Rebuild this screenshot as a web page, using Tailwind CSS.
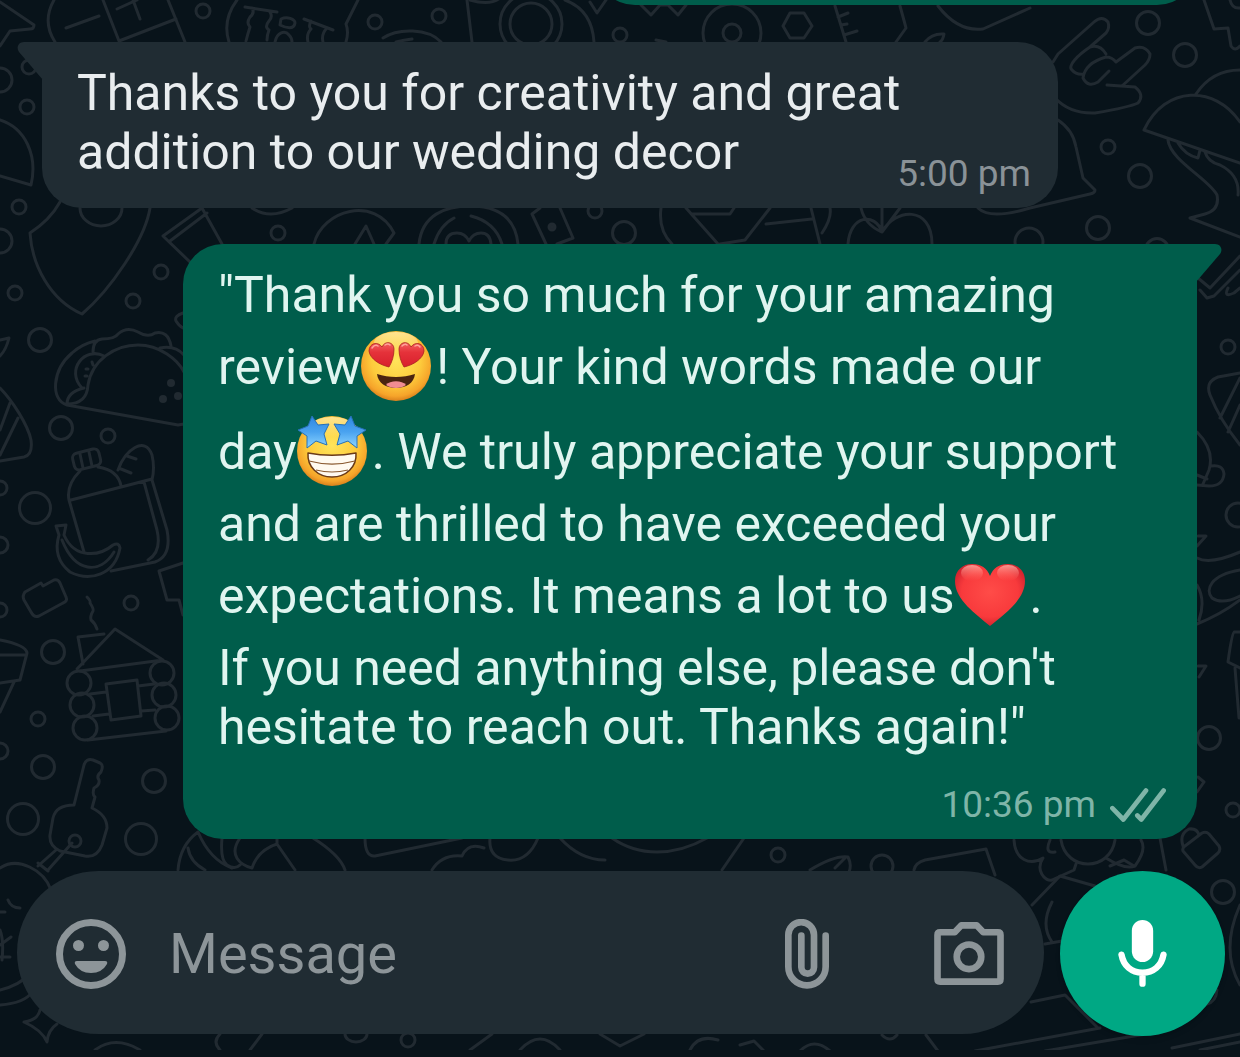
<!DOCTYPE html>
<html lang="en">
  <head>
    <meta charset="UTF-8" />
    <meta name="viewport" content="width=device-width, initial-scale=1.0" />
    <title>Chat</title>
    <script src="https://cdn.jsdelivr.net/npm/@tailwindcss/browser@4"></script>
  </head>
  <body class="bg-[#0b141a] font-[Roboto,sans-serif]">
    <div class="relative flex min-h-screen flex-col overflow-hidden">

      <!-- wallpaper -->
      <div class="absolute inset-x-0 top-0 bottom-[7px] bg-[#08131a]" aria-hidden="true">
        <svg class="h-full w-full" viewBox="0 0 1240 1050" preserveAspectRatio="xMidYMid slice" fill="none" stroke="#212a31" stroke-width="3" stroke-linecap="round" stroke-linejoin="round">
          <!-- top strip -->
          <path d="M0 2L34 25Q34 29 30 29L10 31L0 46" />
          <path d="M54 0C46 14 46 28 55 42M66 28L99 16M103 0L119 41L176 19M168 0L185 42M117 9L137 0M133 0L140 19" />
          <path d="M237 0Q222 20 229 42M245 7L277 12M252 8q3 5-2 9q-4 6 0 10q-2 6-4 14M270 12q3 5-1 9q-5 6 0 9q-2 5-2 10M281 19c6-3 14 0 14 4c-1 7-9 5-15 2zM275 42c2-10 10-12 14-7q3 3 3 7M304 19l29 11M311 21q-3 6 0 8q-5 5-3 13M327 28q-6 6-4 14" />
          <path d="M358 0L346 24Q349 32 346 42M383 38C398 28 428 28 441 42M396 42q8-2 16-3M467 0L472 42M565 0Q592 10 594 42M590 2l7 11L606 0M641 5l10 10l9-10h8l10 10l8-10M656 40l10 2" />
          <path d="M790 13h14l8 13-8 12h-14l-7-12zM835 6L846 42M838 17l10-4M841 25l6-1M844 35l13-4M900 6Q905 24 906 28L896 42M925 42Q932 33 944 34Q943 40 940 42M938 6Q958 32 983 29L1030 8" />
          <circle cx="203" cy="11" r="7" /><circle cx="375" cy="22" r="7" /><circle cx="439" cy="16" r="7" /><circle cx="620" cy="35" r="7" />
          <circle cx="531" cy="24" r="31" /><circle cx="531" cy="24" r="21" /><circle cx="732" cy="33" r="29" /><circle cx="732" cy="33" r="9" />
          <path d="M470 0q20 6 30-2" />
          <!-- hand, bell, hat -->
          <path d="M1053 62L1058 54L1094 22Q1102 15 1108 22Q1110 28 1106 33L1090 47C1078 55 1067 66 1072 70Q1076 75 1084 74M1090 47Q1100 44 1106 54M1106 57Q1085 63 1083 78Q1088 88 1098 82L1109 71M1106 57Q1112 57 1116 62L1135 48Q1145 45 1150 54Q1150 60 1145 65L1122 86M1107 85L1135 87Q1145 95 1138 103Q1130 107 1095 113Q1070 114 1055 98" />
          <path d="M1058 120Q1073 130 1076 147L1083 178L1095 190Q1095 193 1090 194L1030 208Q990 220 978 208" />
          <path d="M1204 0L1214 29L1228 28L1231 46Q1235 52 1240 46M1230 0q2 9 10 8M1144 130C1165 85 1215 85 1240 122M1144 130L1240 163M1196 94Q1212 70 1240 70M1168 140C1170 160 1210 180 1217 195Q1220 210 1205 214L1190 218L1240 237M1178 143Q1185 155 1198 158L1200 150M1205 152Q1208 162 1220 165Q1240 175 1238 195" />
          <circle cx="1148" cy="23" r="11.5" /><circle cx="1185" cy="55" r="11.5" /><circle cx="1108" cy="147" r="7" /><circle cx="1140" cy="176" r="11.5" /><circle cx="1098" cy="228" r="11.5" /><circle cx="1157" cy="250" r="11.5" />
          <!-- left column -->
          <path d="M0 120C25 128 38 155 31 185L0 176M60 202Q50 220 30 233C32 265 50 300 82 314C110 290 145 240 150 208M80 208a21 18 0 0 0 42 0" />
          <circle cx="29" cy="67" r="7" /><circle cx="0" cy="80" r="12" /><circle cx="27" cy="107" r="7" /><circle cx="19" cy="207" r="7" /><circle cx="0" cy="241" r="12" />
          <circle cx="161" cy="272" r="7" /><circle cx="133" cy="301" r="7" /><circle cx="15" cy="293" r="7" /><circle cx="40" cy="340" r="11.5" /><circle cx="61" cy="428" r="11.5" /><circle cx="108" cy="436" r="7" /><circle cx="0" cy="488" r="7" /><circle cx="35" cy="508" r="15.5" />
          <path d="M202 208L163 236L190 262M170 241L207 213M202 208L222 244M252 208q18 12 40 0M314 244C322 210 375 195 394 233l-8 11M355 244l11-18l8 18" />
          <path d="M0 340L9 338Q6 350 0 356M183 313q-9 3-7 8q3 5 7 7" />
          <!-- taco -->
          <path d="M184 424L178 425L67 405C50 400 52 370 72 353Q82 344 95 341M88 385C92 360 115 345 138 345C160 345 178 360 184 372M93 352Q93 340 102 339Q115 339 118 334Q127 326 138 332Q148 338 155 333Q168 330 171 346M160 348Q175 345 184 355M104 356C85 346 65 370 82 388M67 404q0-12 17-16M67 404q20 0 21-19M86 369l2 0M85 376l2 0M92 362l1 3" />
          <g fill="#212a31" stroke="none"><circle cx="171" cy="383" r="4" /><circle cx="163" cy="399" r="4" /><circle cx="178" cy="396" r="4" /></g>
          <path d="M0 388C12 400 28 425 31 440Q33 455 24 457L0 461M10 403L0 430M18 418L0 455" />
          <!-- lunch bag and banana -->
          <rect x="73" y="451" width="27" height="17" rx="5" transform="rotate(-14 86 459)" />
          <path d="M80 454l3 14M89 452l3 14M80 471Q66 485 69 500L84 552M98 467Q118 470 121 486M71 500L152 479M118 470C125 450 145 435 152 455Q155 468 152 480L167 530Q172 556 155 562L111 571M144 482L157 530Q162 552 148 560M127 456l9 3M121 469l10 4" />
          <path d="M56 526l10-1l-2 10C75 560 100 556 113 545q6-3 7 3C115 575 90 582 70 572C55 560 56 545 59 535zM62 540C75 573 100 575 114 552" />
          <path d="M25 592l16-9l2 3l11-6q4-1 6 3l6 14q2 4-3 6l-24 13q-5 2-8-4l-7-12q-2-4 1-8zM87 597q4 4 3 6q4 6 3 8q-3 5-2 9q4 3 6 9M183 563l-24 8l8 29h12l4 15" />
          <!-- cabin -->
          <path d="M104 634l-26 3l5 27M77 669L115 629L163 660L80 671M106 684l31-4l4 36l-30 4zM90 694l16-2M138 686l16-2M93 716l16-2M141 711l14-1M88 740l78-9" />
          <circle cx="79" cy="683" r="12" /><circle cx="82" cy="705" r="12" /><circle cx="85" cy="728" r="12" /><circle cx="162" cy="673" r="12" /><circle cx="164" cy="695" r="12" /><circle cx="167" cy="718" r="12" />
          <circle cx="0" cy="545" r="8" /><circle cx="0" cy="610" r="7" /><circle cx="131" cy="603" r="7" /><circle cx="53" cy="652" r="11.5" /><circle cx="38" cy="719" r="7" /><circle cx="0" cy="751" r="8" /><circle cx="43" cy="767" r="11.5" /><circle cx="154" cy="781" r="11.5" /><circle cx="23" cy="819" r="15.5" /><circle cx="141" cy="839" r="15.5" />
          <path d="M0 640Q26 645 27 653L20 680L0 683M0 655h26M14 682L0 712" />
          <!-- key -->
          <path d="M74 805L84 765Q86 758 93 760L100 763Q104 765 101 772Q96 776 99 780Q100 785 94 788Q92 795 95 797L92 808Q107 815 107 828L102 845Q97 858 85 856L60 851Q49 846 50 835L53 818Q56 805 74 805M56 850L38 866M72 843L48 870M38 863l10 8" />
          <circle cx="75" cy="841" r="6" />
          <!-- bottom left -->
          <path d="M0 868C18 856 44 870 51 890M8 900q3 8 12 8M0 912h5M0 990Q20 985 28 975M0 1005Q25 1003 32 992M0 930q4 10 2 30M0 945l11-8M0 957h10M24 1022Q38 1020 40 1010M24 1022Q42 1030 47 1042Q48 1030 57 1024M95 1050Q115 1035 140 1050M220 1034Q212 1042 220 1050M262 1034L250 1050M345 1034a11 8 0 0 0 22 0" />
          <circle cx="408" cy="1040" r="7" />
          <path d="M178 870Q180 845 198 832Q210 860 232 868M188 848Q190 862 205 870M222 838Q220 860 227 865Q235 870 240 865M240 838C228 855 240 865 252 868Q258 850 277 844V838M277 844L295 870M313 838Q340 855 345 870M365 838Q365 857 375 856L462 838" />
          <path d="M432 870q10-16 30-14q6-14 22-8M490 838q-2 20 18 22t30-22M560 838q20 22 45 22M612 838q20 14 45 14t50-14M722 870l22-32" />
          <path d="M470 1050l22-16M520 1050q20-22 40 0M600 1034l20 12l24-12M690 1050q8-16 28-10" />
          <!-- bottom right -->
          <circle cx="778" cy="855" r="7" /><circle cx="882" cy="866" r="11" /><circle cx="1223" cy="892" r="11.5" />
          <path d="M810 870Q835 855 848 857Q852 865 849 872M835 868l10-10M914 870Q915 863 925 860L986 849L995 875M1014 840C1015 860 1030 866 1043 858C1035 870 1045 882 1052 880L1074 870L1076 864M1061 840C1066 872 1110 872 1115 840M1050 840q-6 14 5 12M1106 858Q1125 870 1135 866Q1147 850 1141 840M1160 838L1166 870" />
          <path d="M1185 846l17-13q4-2 7 1l10 12q2 4-1 7l-16 14q-4 2-7-2l-12-14q-1-3 2-5zM1183 846q-4-12 6-17q8-1 10 6M1032 905L1060 876L1095 886M1110 866l14-6l10 6M1052 902Q1040 925 1052 942M1045 944L1062 941M1240 905Q1220 950 1240 985" />
          <path d="M1031 1002L1065 995L1098 1028M975 1051L1100 1028M1045 1051L1170 1030M1172 1048L1240 1034M1200 1050L1240 1042M740 1045l14-4l10 10M800 1051q14-14 30 0M882 1035q8 8 15 0M926 1035l12 16M1217 990q-1 12-10 14" />
          <!-- right edge -->
          <path d="M1198 278L1210 288L1240 256M1200 290L1207 298L1214 296L1240 270M1228 288q-5 10 6 5l6-5M1240 373L1218 377Q1205 382 1210 395Q1220 420 1240 445M1240 378L1220 418M1240 405L1228 432M1197 432Q1215 450 1209 470L1203 484M1211 466q12-2 13 8q-1 12-15 12l-12-1M1197 475l10 4M1198 536h8l-9 10M1197 558Q1210 565 1240 552M1240 570C1210 575 1205 590 1212 598Q1222 605 1240 596M1197 624Q1220 615 1240 600M1197 585Q1206 600 1199 620M1198 666h8l-7 11M1240 632h-6q-2 0-6 30l12 6M1235 668l4 50M1198 777l6 5l-7 10" />
          <circle cx="1228" cy="347" r="7" /><circle cx="1238" cy="515" r="12" /><circle cx="1209" cy="738" r="11.5" /><circle cx="1233" cy="810" r="7" />
          <!-- strip between the bubbles -->
          <path d="M419 244C422 215 445 206 470 206S515 215 518 244M434 244Q440 225 454 218M471 216Q495 222 502 244M446 244q0-11 11-11q8 0 12 8q4-8 12-8q9 0 10 11M540 208L532 214L546 244M560 208l13 30l-16 6M661 208Q658 230 672 244M686 208L718 244M692 214h38l4-6M770 208L745 240L720 244M766 224L812 219M811 208L820 244M830 208q2 10-8 25M861 208Q865 225 882 232M882 208v24M900 208L882 232M848 244C850 215 875 212 882 232C895 208 932 205 932 244" />
          <circle cx="595" cy="211" r="7" /><circle cx="624" cy="233" r="11.5" /><circle cx="278" cy="233" r="7" /><circle cx="1029" cy="242" r="14" /><circle cx="552" cy="227" r="3" fill="#212a31" />
        </svg>
      </div>

      <!-- messages -->
      <main class="relative flex flex-col text-[50px] leading-[59px]">
        <div class="-mt-[75px] mr-[43px] h-20 w-1/2 max-w-[602px] self-end rounded-[40px] bg-[#005d4b]"></div>

        <article class="relative mt-[37px] mr-[182px] ml-[42px] rounded-[40px] rounded-tl-none bg-[#202c33] px-[35px] pt-[22px] pb-3 text-[#e9edef]">
          <svg class="absolute top-0 -left-[25px] h-[38px] w-[26px]" viewBox="0 0 26 38" fill="#202c33" aria-hidden="true">
            <path d="M26 0H7C1 0-1 6 2 10L26 38Z" />
          </svg>
          <p>Thanks to you for creativity and great addition to our wedding decor</p>
          <div class="-mt-[30px] -mr-2 text-right text-[37px] leading-[44px] text-[#8a9297]"><time>5:00 pm</time></div>
        </article>

        <article class="relative mt-9 mr-[43px] ml-[183px] rounded-[40px] rounded-tr-none bg-[#005d4b] px-[35px] pt-[22px] pb-3 text-[#e0f5f0]">
          <svg class="absolute top-0 -right-[25px] h-[38px] w-[26px]" viewBox="0 0 26 38" fill="#005d4b" aria-hidden="true">
            <path d="M0 0H19C25 0 27 6 24 10L0 38Z" />
          </svg>
          <p>
            "Thank you so much for your amazing
            <span class="whitespace-nowrap">review<svg class="inline h-[85px] w-[75px] align-[-26px]" viewBox="3 0 75 85" role="img" aria-label="heart eyes">
              <defs>
                <radialGradient id="face" cx="50%" cy="42%" r="58%">
                  <stop offset="0" stop-color="#ffe45a" /><stop offset="0.6" stop-color="#fdcb3c" /><stop offset="0.88" stop-color="#f6a42a" /><stop offset="1" stop-color="#d9801c" />
                </radialGradient>
                <linearGradient id="shine" x1="0" y1="0" x2="0" y2="1">
                  <stop offset="0" stop-color="#fff3b8" stop-opacity="0.7" /><stop offset="1" stop-color="#fff3b8" stop-opacity="0" />
                </linearGradient>
                <linearGradient id="eye" x1="0" y1="0" x2="0" y2="1">
                  <stop offset="0" stop-color="#f4605f" /><stop offset="0.4" stop-color="#e5323a" /><stop offset="1" stop-color="#d81f2c" />
                </linearGradient>
              </defs>
              <circle cx="38" cy="41" r="35" fill="url(#face)" />
              <ellipse cx="38" cy="18" rx="22" ry="11" fill="url(#shine)" />
              <path d="M31 42C22 40 12 34 11 26C11 18 20 16 24 22C27 15 36 17 36 24C36 31 34 37 31 42Z" fill="url(#eye)" stroke="#a8201f" stroke-width="0.800" />
              <path d="M46 42C43 37 41 31 41 24C41 17 50 15 53 22C57 16 66 18 66 26C65 34 55 40 46 42Z" fill="url(#eye)" stroke="#a8201f" stroke-width="0.800" />
              <path d="M14 23q3-4 6-2M44 21q3-3 5-1M57 21q3-2 5 1M27 20q3-2 5 0" stroke="#ffa39a" stroke-width="1.500" stroke-linecap="round" fill="none" />
              <path d="M19 49C31 53 45 53 57 49C56 58 48 63 38 63S20 58 19 49Z" fill="#4a2410" />
              <path d="M28 60C32 55 44 55 48 60Q44 63 38 63T28 60Z" fill="#f08c92" />
            </svg>!</span>
            Your kind words made our
            <span class="whitespace-nowrap">day<svg class="inline h-[85px] w-[75px] align-[-26px]" viewBox="3 0 75 85" role="img" aria-label="star eyes">
              <defs>
                <linearGradient id="star" x1="0" y1="0" x2="0" y2="1">
                  <stop offset="0" stop-color="#2f86e0" /><stop offset="0.5" stop-color="#4aa3f0" /><stop offset="1" stop-color="#8ed6ff" />
                </linearGradient>
              </defs>
              <circle cx="38" cy="41" r="35" fill="url(#face)" />
              <ellipse cx="38" cy="17" rx="22" ry="10" fill="url(#shine)" />
              <path d="M18 6L24 15L35 14L30 24L33 35L22 31L13 38L13 26L4 20L14 16Z" fill="url(#star)" stroke="#2670b8" stroke-width="1" stroke-linejoin="round" />
              <path d="M57 6L61 16L72 20L63 26L63 38L54 31L43 35L46 24L40 14L51 15Z" fill="url(#star)" stroke="#2670b8" stroke-width="1" stroke-linejoin="round" />
              <path d="M14 43C30 46 46 46 62 43C63 57 52 67 38 67S13 57 14 43Z" fill="#fffaf0" stroke="#6a3a18" stroke-width="1.500" stroke-linejoin="round" />
              <path d="M15 51C30 55 46 55 61 51M22 60Q38 64 54 60" fill="none" stroke="#8a5a30" stroke-width="1.200" />
            </svg>.</span>
            We truly appreciate your support and are thrilled to have exceeded your expectations. It means a lot to
            <span class="whitespace-nowrap">us<svg class="inline h-[85px] w-[75px] align-[-26px]" viewBox="3 0 75 85" role="img" aria-label="red heart">
              <defs>
                <radialGradient id="heart" cx="50%" cy="45%" r="62%">
                  <stop offset="0" stop-color="#ff4c48" /><stop offset="0.65" stop-color="#f83a3c" /><stop offset="1" stop-color="#c41c2a" />
                </radialGradient>
                <linearGradient id="gloss" x1="0" y1="0" x2="0" y2="1">
                  <stop offset="0" stop-color="#ffb3a8" stop-opacity="0.8" /><stop offset="1" stop-color="#ff7068" stop-opacity="0" />
                </linearGradient>
              </defs>
              <path d="M38 72C24 60 3 46 3 27C3 16 11 10 20 10C29 10 35 14 38 22C41 14 47 10 56 10C65 10 73 16 73 27C73 46 52 60 38 72Z" fill="url(#heart)" />
              <ellipse cx="20" cy="19" rx="11" ry="8" fill="url(#gloss)" /><ellipse cx="56" cy="19" rx="11" ry="8" fill="url(#gloss)" />
            </svg>.</span>
          </p>
          <p>If you need anything else, please don't hesitate to reach out. Thanks again!"</p>
          <div class="mt-[26px] -mr-1 flex items-center justify-end gap-[14px] text-[37px] leading-[44px] text-[#7fb5a8]">
            <time>10:36 pm</time>
            <svg class="h-[35px] w-[56px]" viewBox="0 0 168 104" fill="none" stroke="currentColor" stroke-width="14" stroke-linecap="round" stroke-linejoin="round" role="img" aria-label="Delivered">
              <path d="M7 60L40 94L108 7M82 82L94 94L161 7" />
            </svg>
          </div>
        </article>
      </main>

      <!-- composer -->
      <form class="relative mt-auto flex items-start gap-4 pt-8 pr-[15px] pb-[21px] pl-[17px]">
        <div class="flex h-[163px] min-w-0 flex-1 items-center rounded-full bg-[#202c33] pt-0.5 pr-10 pl-[39px] text-[#8d9599]">
          <button type="button" aria-label="Emoji" class="shrink-0">
            <svg class="size-[70px]" viewBox="0 0 70 70" fill="currentColor">
              <circle cx="35" cy="35" r="31.500" fill="none" stroke="currentColor" stroke-width="7" />
              <circle cx="22.500" cy="26.500" r="5.500" /><circle cx="47.500" cy="26.500" r="5.500" />
              <path d="M21 42H49Q52 42 51 45Q46 54 35 54T19 45Q18 42 21 42Z" />
            </svg>
          </button>
          <input type="text" aria-label="Message" placeholder="Message" class="ml-[43px] h-20 min-w-0 flex-1 bg-transparent text-[56px] outline-none placeholder:text-[#8d9599] placeholder:opacity-100" />
          <button type="button" aria-label="Attach" class="shrink-0">
            <svg class="h-[70px] w-11" viewBox="0 0 132 210" fill="none" stroke="currentColor" stroke-width="20" stroke-linecap="round">
              <path d="M122 50V143a56 56 0 0 1-112 0V48a38.500 38.500 0 0 1 77 0V145a19 19 0 0 1-38 0V50" />
            </svg>
          </button>
          <button type="button" aria-label="Camera" class="ml-[105px] shrink-0">
            <svg class="h-[63px] w-[70px]" viewBox="0 0 210 190" fill="none" stroke="currentColor" stroke-width="20" stroke-linejoin="round">
              <path d="M18 31H62L82 10H128L148 31H192Q200 31 200 39V172Q200 180 192 180H18Q10 180 10 172V39Q10 31 18 31Z" />
              <circle cx="105" cy="105" r="37" />
            </svg>
          </button>
        </div>
        <button type="button" aria-label="Record voice message" class="flex size-[165px] shrink-0 items-center justify-center rounded-full bg-[#00a884] text-white shadow-md">
          <svg class="h-[67px] w-[49px]" viewBox="0 0 146 201" fill="none" stroke="currentColor" stroke-width="19" stroke-linecap="round">
            <rect x="41" y="0" width="64" height="126" rx="32" fill="currentColor" stroke="none" />
            <path d="M10 104C16 138 40 158 73 158S130 138 136 104M73 158V191" />
          </svg>
        </button>
      </form>
    </div>
  </body>
</html>
